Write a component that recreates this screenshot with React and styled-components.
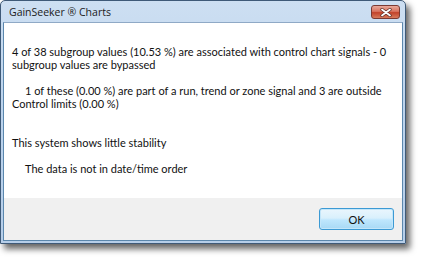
import React from "react";
import styled, { createGlobalStyle } from "styled-components";

const Global = createGlobalStyle`
  html, body { margin: 0; padding: 0; background: #ffffff; }
  body { font-family: "Open Sans", "Noto Sans", sans-serif; }
`;

const Page = styled.div`
  width: 421px;
  height: 259px;
  box-sizing: border-box;
`;

const Window = styled.div`
  width: 406px;
  height: 244px;
  box-sizing: border-box;
  display: flex;
  flex-direction: column;
  border: 1px solid #3f5a78;
  border-radius: 5px 5px 0 0;
  background: linear-gradient(180deg, #cddff2 0%, #bdd4ed 40%, #b6cee9 100%);
  box-shadow: 4px 5px 6px rgba(0, 0, 0, 0.6);
  padding: 0 2px 2px 2px;
`;

const TitleBar = styled.div`
  height: 21px;
  display: flex;
  align-items: center;
  justify-content: space-between;
  padding: 0 3px 0 6px;
`;

const Title = styled.span`
  font-family: "Open Sans", "Noto Sans", sans-serif;
  font-size: 10.5px;
  color: #1b1b1b;
`;

const CloseButton = styled.div`
  width: 29px;
  height: 14px;
  margin-top: 1px;
  border-radius: 3px;
  border: 1px solid #7a3a33;
  background: linear-gradient(180deg, #e8a99b 0%, #d8735f 45%, #c2432b 55%, #d77a5c 100%);
  display: flex;
  align-items: center;
  justify-content: center;
  box-sizing: border-box;
`;

const Client = styled.div`
  flex: 1;
  display: flex;
  flex-direction: column;
  border: 1px solid #5b87ad;
  border-top-color: #8fa9c6;
  background: #ffffff;
`;

const Body = styled.div`
  flex: 1;
  padding: 22px 8px 0 8px;
  background: #ffffff;
`;

const Line = styled.div`
  font-family: "Lato", "Open Sans", sans-serif;
  font-size: 11px;
  line-height: 13px;
  height: 13px;
  color: #111;
  white-space: pre;
  padding-left: ${(p) => (p.$indent ? "13px" : "0")};
`;

const Footer = styled.div`
  height: 42px;
  background: #f0f0f0;
  display: flex;
  align-items: center;
  justify-content: flex-end;
  padding-right: 8px;
`;

const OkButton = styled.button`
  width: 75px;
  height: 22px;
  margin-top: 0;
  border: 1px solid #3c9ad4;
  border-radius: 3px;
  background: linear-gradient(180deg, #eaf6fd 0%, #d9f0fc 45%, #bee6fd 55%, #a7d9f5 100%);
  box-shadow: inset 0 0 0 1px #c3e6fa;
  font-family: "Lato", "Open Sans", sans-serif;
  font-size: 11px;
  color: #111;
  padding: 0;
`;

const lines = [
  { t: "4 of 38 subgroup values (10.53 %) are associated with control chart signals - 0" },
  { t: "subgroup values are bypassed" },
  { t: "" },
  { t: "1 of these (0.00 %) are part of a run, trend or zone signal and 3 are outside", indent: true },
  { t: "Control limits (0.00 %)" },
  { t: "" },
  { t: "" },
  { t: "This system shows little stability" },
  { t: "" },
  { t: "The data is not in date/time order", indent: true },
];

export default function App() {
  return (
    <Page>
      <Global />
      <Window>
        <TitleBar>
          <Title>GainSeeker ® Charts</Title>
          <CloseButton>
            <svg width="12" height="9" viewBox="0 0 12 9">
              <path d="M2 1.5 L10 7.5 M10 1.5 L2 7.5" stroke="#5a2a22" strokeWidth="3.2" strokeLinecap="round" />
              <path d="M2 1.5 L10 7.5 M10 1.5 L2 7.5" stroke="#ffffff" strokeWidth="1.8" strokeLinecap="round" />
            </svg>
          </CloseButton>
        </TitleBar>
        <Client>
          <Body>
            {lines.map((l, i) => (
              <Line key={i} $indent={l.indent}>{l.t}</Line>
            ))}
          </Body>
          <Footer>
            <OkButton>OK</OkButton>
          </Footer>
        </Client>
      </Window>
    </Page>
  );
}
